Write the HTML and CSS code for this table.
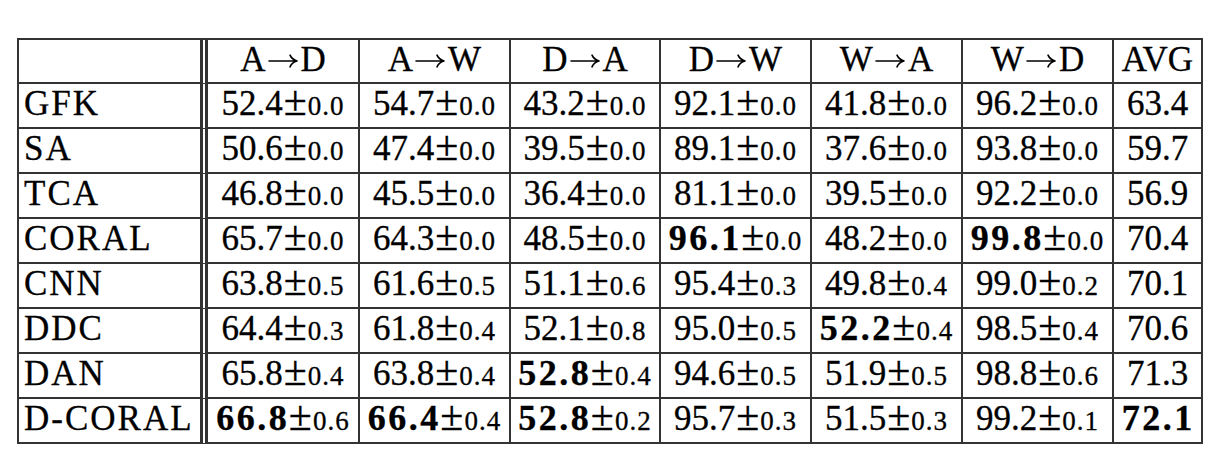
FILE: index.html
```html
<!DOCTYPE html>
<html>
<head>
<meta charset="utf-8">
<link rel="stylesheet" href="styles.css">
</head>
<body>
<table class="results">
  <thead>
    <tr>
      <th class="label c0"></th>
      <th class="c1">A<svg class="arrow" viewBox="0 0 30 14" aria-label="→"><path d="M1 7H28.5M22 1.2Q24 5.6 29 7Q24 8.4 22 12.8"/></svg>D</th>
      <th class="c2">A<svg class="arrow" viewBox="0 0 30 14" aria-label="→"><path d="M1 7H28.5M22 1.2Q24 5.6 29 7Q24 8.4 22 12.8"/></svg>W</th>
      <th class="c3">D<svg class="arrow" viewBox="0 0 30 14" aria-label="→"><path d="M1 7H28.5M22 1.2Q24 5.6 29 7Q24 8.4 22 12.8"/></svg>A</th>
      <th class="c4">D<svg class="arrow" viewBox="0 0 30 14" aria-label="→"><path d="M1 7H28.5M22 1.2Q24 5.6 29 7Q24 8.4 22 12.8"/></svg>W</th>
      <th class="c5">W<svg class="arrow" viewBox="0 0 30 14" aria-label="→"><path d="M1 7H28.5M22 1.2Q24 5.6 29 7Q24 8.4 22 12.8"/></svg>A</th>
      <th class="c6">W<svg class="arrow" viewBox="0 0 30 14" aria-label="→"><path d="M1 7H28.5M22 1.2Q24 5.6 29 7Q24 8.4 22 12.8"/></svg>D</th>
      <th class="c7">AVG</th>
    </tr>
  </thead>
  <tbody>
    <tr>
      <td class="label">GFK</td>
      <td>52.4<span class="pm">±</span><span class="sd">0.0</span></td>
      <td>54.7<span class="pm">±</span><span class="sd">0.0</span></td>
      <td>43.2<span class="pm">±</span><span class="sd">0.0</span></td>
      <td>92.1<span class="pm">±</span><span class="sd">0.0</span></td>
      <td>41.8<span class="pm">±</span><span class="sd">0.0</span></td>
      <td>96.2<span class="pm">±</span><span class="sd">0.0</span></td>
      <td>63.4</td>
    </tr>
    <tr>
      <td class="label">SA</td>
      <td>50.6<span class="pm">±</span><span class="sd">0.0</span></td>
      <td>47.4<span class="pm">±</span><span class="sd">0.0</span></td>
      <td>39.5<span class="pm">±</span><span class="sd">0.0</span></td>
      <td>89.1<span class="pm">±</span><span class="sd">0.0</span></td>
      <td>37.6<span class="pm">±</span><span class="sd">0.0</span></td>
      <td>93.8<span class="pm">±</span><span class="sd">0.0</span></td>
      <td>59.7</td>
    </tr>
    <tr>
      <td class="label">TCA</td>
      <td>46.8<span class="pm">±</span><span class="sd">0.0</span></td>
      <td>45.5<span class="pm">±</span><span class="sd">0.0</span></td>
      <td>36.4<span class="pm">±</span><span class="sd">0.0</span></td>
      <td>81.1<span class="pm">±</span><span class="sd">0.0</span></td>
      <td>39.5<span class="pm">±</span><span class="sd">0.0</span></td>
      <td>92.2<span class="pm">±</span><span class="sd">0.0</span></td>
      <td>56.9</td>
    </tr>
    <tr>
      <td class="label">CORAL</td>
      <td>65.7<span class="pm">±</span><span class="sd">0.0</span></td>
      <td>64.3<span class="pm">±</span><span class="sd">0.0</span></td>
      <td>48.5<span class="pm">±</span><span class="sd">0.0</span></td>
      <td><b>96.1</b><span class="pm">±</span><span class="sd">0.0</span></td>
      <td>48.2<span class="pm">±</span><span class="sd">0.0</span></td>
      <td><b>99.8</b><span class="pm">±</span><span class="sd">0.0</span></td>
      <td>70.4</td>
    </tr>
    <tr>
      <td class="label">CNN</td>
      <td>63.8<span class="pm">±</span><span class="sd">0.5</span></td>
      <td>61.6<span class="pm">±</span><span class="sd">0.5</span></td>
      <td>51.1<span class="pm">±</span><span class="sd">0.6</span></td>
      <td>95.4<span class="pm">±</span><span class="sd">0.3</span></td>
      <td>49.8<span class="pm">±</span><span class="sd">0.4</span></td>
      <td>99.0<span class="pm">±</span><span class="sd">0.2</span></td>
      <td>70.1</td>
    </tr>
    <tr>
      <td class="label">DDC</td>
      <td>64.4<span class="pm">±</span><span class="sd">0.3</span></td>
      <td>61.8<span class="pm">±</span><span class="sd">0.4</span></td>
      <td>52.1<span class="pm">±</span><span class="sd">0.8</span></td>
      <td>95.0<span class="pm">±</span><span class="sd">0.5</span></td>
      <td><b>52.2</b><span class="pm">±</span><span class="sd">0.4</span></td>
      <td>98.5<span class="pm">±</span><span class="sd">0.4</span></td>
      <td>70.6</td>
    </tr>
    <tr>
      <td class="label">DAN</td>
      <td>65.8<span class="pm">±</span><span class="sd">0.4</span></td>
      <td>63.8<span class="pm">±</span><span class="sd">0.4</span></td>
      <td><b>52.8</b><span class="pm">±</span><span class="sd">0.4</span></td>
      <td>94.6<span class="pm">±</span><span class="sd">0.5</span></td>
      <td>51.9<span class="pm">±</span><span class="sd">0.5</span></td>
      <td>98.8<span class="pm">±</span><span class="sd">0.6</span></td>
      <td>71.3</td>
    </tr>
    <tr>
      <td class="label">D-CORAL</td>
      <td><b>66.8</b><span class="pm">±</span><span class="sd">0.6</span></td>
      <td><b>66.4</b><span class="pm">±</span><span class="sd">0.4</span></td>
      <td><b>52.8</b><span class="pm">±</span><span class="sd">0.2</span></td>
      <td>95.7<span class="pm">±</span><span class="sd">0.3</span></td>
      <td>51.5<span class="pm">±</span><span class="sd">0.3</span></td>
      <td>99.2<span class="pm">±</span><span class="sd">0.1</span></td>
      <td><b>72.1</b></td>
    </tr>
  </tbody>
</table>
</body>
</html>
```

FILE: styles.css
```css
html, body {
  margin: 0;
  padding: 0;
  background: #ffffff;
}

body {
  padding: 38px 0 0 17px;
  font-family: "Liberation Serif", "Times New Roman", serif;
  color: #000000;
}

.results {
  border-collapse: separate;
  border-spacing: 0;
  table-layout: fixed;
  border-top: 2px solid #333333;
  border-left: 2px solid #333333;
  -webkit-text-stroke: 0.3px #000000;
}

.results th,
.results td {
  box-sizing: border-box;
  height: 45px;
  padding: 0;
  font-size: 35px;
  font-weight: normal;
  line-height: 40px;
  vertical-align: top;
  text-align: center;
  white-space: nowrap;
  border-right: 2px solid #333333;
  border-bottom: 2px solid #333333;
}

.results thead th {
  height: 44px;
}

.results .label {
  text-align: left;
  padding-left: 5px;
  letter-spacing: 2px;
  border-right: 8px double #333333;
}

.c0 { width: 189px; }
.c1 { width: 152px; }
.c2 { width: 151px; }
.c3 { width: 150px; }
.c4 { width: 151px; }
.c5 { width: 151px; }
.c6 { width: 151px; }
.c7 { width: 89px; }

.arrow {
  width: 30px;
  height: 14px;
  margin: 0 3px 0 2px;
  vertical-align: 3px;
  overflow: visible;
}

.arrow path {
  fill: none;
  stroke: #000000;
  stroke-width: 1.6;
  stroke-linecap: round;
  stroke-linejoin: round;
}

.results b {
  font-size: 36px;
  font-weight: bold;
  letter-spacing: 2.5px;
  margin-right: -1.5px;
  line-height: 0;
}

.pm {
  font-size: 42px;
  margin: 0 1px 0 1px;
  line-height: 0;
}

.sd {
  font-size: 27px;
  letter-spacing: 1px;
  line-height: 0;
}
```
